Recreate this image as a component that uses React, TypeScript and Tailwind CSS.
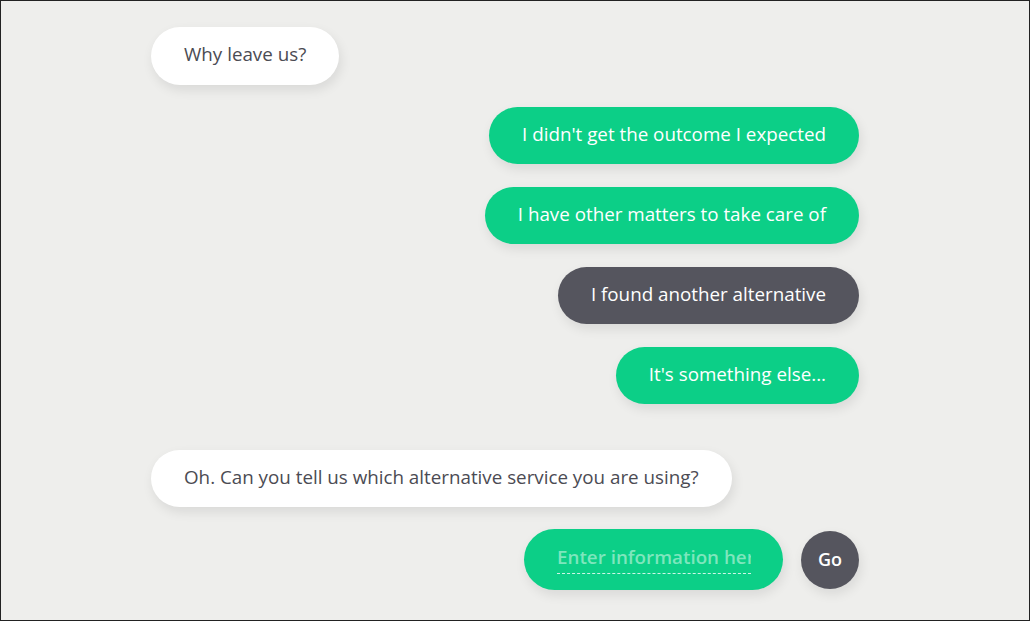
export default function App() {
  const font = { fontFamily: '"Open Sans", "Noto Sans", sans-serif' };
  const bubble =
    'h-[57px] rounded-full px-[33px] pb-[3px] flex items-center text-[18.8px] shadow-[2px_5px_12px_rgba(0,0,0,0.09)] whitespace-nowrap';

  return (
    <div
      className="w-[1030px] h-[621px] bg-[#eeeeec] border border-[#222] overflow-hidden"
      style={font}
    >
      <div className="ml-[150px] w-[708px] pt-[26px] flex flex-col">
        <div className="flex">
          <div className={`${bubble} h-[58px] bg-white text-[#4b4b53]`}>Why leave us?</div>
        </div>

        <div className="flex flex-col items-end gap-[23px] mt-[22px]">
          <div className={`${bubble} bg-[#0ccf87] text-white font-medium`}>I didn't get the outcome I expected</div>
          <div className={`${bubble} bg-[#0ccf87] text-white font-medium`}>I have other matters to take care of</div>
          <div className={`${bubble} bg-[#55555e] text-white font-medium`}>I found another alternative</div>
          <div className={`${bubble} bg-[#0ccf87] text-white font-medium`}>It's something else...</div>
        </div>

        <div className="flex mt-[46px]">
          <div className={`${bubble} bg-white text-[#4b4b53]`}>
            Oh. Can you tell us which alternative service you are using?
          </div>
        </div>

        <div className="flex justify-end items-center gap-[18px] mt-[22px]">
          <div className="h-[61px] w-[259px] rounded-full bg-[#0ccf87] pl-[33px] pr-[32px] pb-[2px] flex items-center shadow-[2px_5px_12px_rgba(0,0,0,0.09)]">
            <input
              className="w-full bg-transparent text-[18.8px] font-semibold text-white placeholder:text-[#7ee6bd] border-b border-dashed border-white/80 outline-none pb-[1px]"
              placeholder="Enter information here"
              style={font}
            />
          </div>
          <button className="w-[58px] h-[58px] rounded-full bg-[#55555e] text-white text-[18px] font-semibold shadow-[2px_5px_12px_rgba(0,0,0,0.09)]">
            Go
          </button>
        </div>
      </div>
    </div>
  );
}
